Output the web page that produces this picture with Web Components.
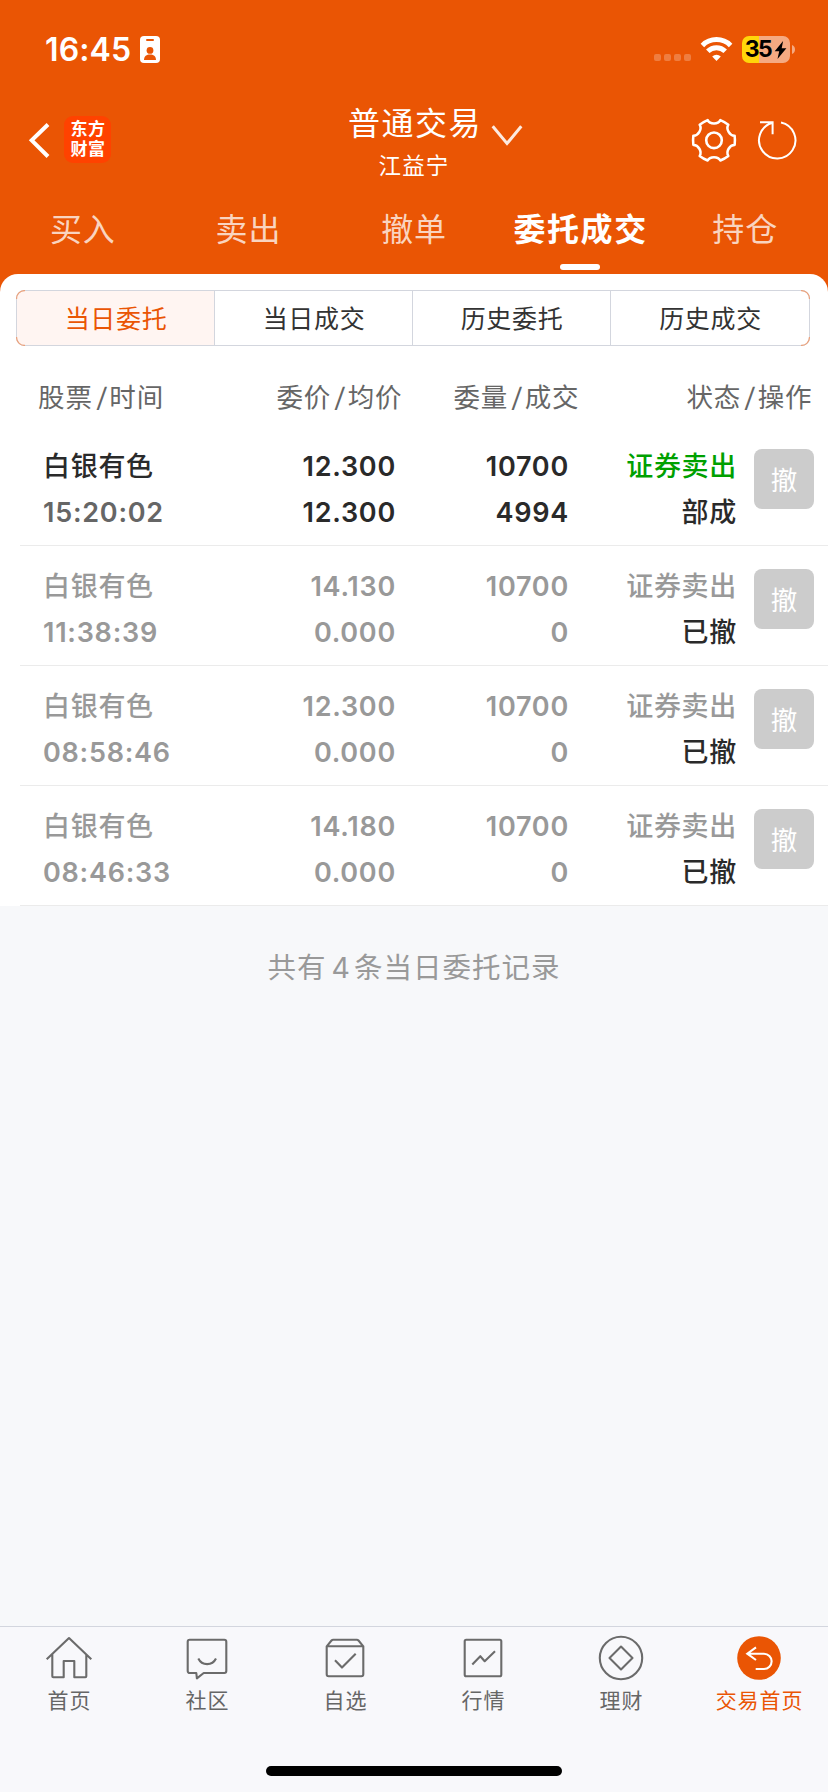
<!DOCTYPE html>
<html lang="zh-CN">
<head>
<meta charset="utf-8">
<title>委托成交</title>
<style>
html,body{margin:0;padding:0}
body{width:828px;height:1792px;overflow:hidden;background:#f7f8fa;font-family:Inter,"Noto Sans CJK SC",sans-serif}
</style>
</head>
<body>
<trade-app></trade-app>
<script>
const define = (name, html, after) => customElements.define(name, class extends HTMLElement {
  constructor() {
    super();
    const t = document.createElement('template');
    t.innerHTML = '<style>*{box-sizing:border-box}svg{display:block;flex:none}</style>' + html;
    this.attachShadow({mode: 'open'}).append(t.content.cloneNode(true));
  }
  connectedCallback() { if (after) after(this, this.shadowRoot); }
});

define('status-bar', `
<style>
:host{display:flex;height:98px;padding:0 33px 0 44px;color:#fff}
.time{margin-top:30px;font-size:32px;line-height:40px;font-weight:600;letter-spacing:.1px;width:96px;padding-left:1px;white-space:nowrap}
.badge{margin-top:36px}
.right{margin:36px 0 0 auto;display:flex}
.battery{display:flex;align-items:center;justify-content:center;width:48px;height:27px;margin-left:9px;border-radius:7px;background:linear-gradient(90deg,#ffd60a 17px,#f5aa82 17px);color:#000;font-size:23px;font-weight:700;line-height:27px;letter-spacing:-1.600px}
.battery svg{margin-left:3px}
.nub{margin-left:2px}
</style>
<span class="time">16:45</span>
<svg class="badge" width="20" height="27" viewBox="0 0 20 27"><rect width="20" height="27" rx="4" fill="#fff"/><rect x="6" y="3" width="8" height="2" rx="1" fill="#ea5504"/><circle cx="10" cy="14.4" r="3.4" fill="#ea5504"/><path d="M4 24c0-3.600 2.600-5.400 6-5.400s6 1.800 6 5.400z" fill="#ea5504"/></svg>
<div class="right">
<svg width="79" height="27" viewBox="0 0 79 27"><g fill="#fff" fill-opacity=".24"><rect y="18" width="7" height="7" rx="2"/><rect x="10" y="18" width="7" height="7" rx="2"/><rect x="20" y="18" width="7" height="7" rx="2"/><rect x="30" y="18" width="7" height="7" rx="2"/></g>
<g fill="none" stroke="#fff" stroke-width="5"><path d="M48.400 9.400a20 20 0 0 1 28.200 0"/><path d="M53.800 15.200a12.500 12.500 0 0 1 17.400 0"/></g><path d="M58.200 20.400a6.200 6.200 0 0 1 8.600 0L62.500 25z" fill="#fff"/></svg>
<div class="battery"><span>35</span><svg width="13" height="18" viewBox="0 0 12 18"><path d="M8.600 0L.2 10.300h4.500L3 18 11.900 7.200H7.200z"/></svg></div>
<svg class="nub" width="3" height="27" viewBox="0 0 3 27"><path d="M0 9c4 1.500 4 7.500 0 9z" fill="#f5aa82"/></svg>
</div>`);

define('app-logo', `
<style>
:host{display:flex;flex-direction:column;align-items:center;width:47px;height:47px;padding:4px 0 0 1px;border-radius:9px;background:#ff4200;color:#fff;font-family:"Liberation Sans","Noto Sans CJK SC",sans-serif;font-size:17px;line-height:20px;font-weight:700;letter-spacing:.5px}
</style><span>东方</span><span>财富</span>`);

define('title-bar', `
<style>
:host{display:grid;grid-template-columns:347px 132px 1fr;height:84px;color:#fff}
.left{display:flex;align-items:flex-start;padding:18px 0 0 26px}
.left svg{margin-right:10px}
.mid{text-align:center;white-space:nowrap}
.t{font-size:32px;line-height:40px;margin-top:6px;letter-spacing:1.500px;padding-left:1px}
.s{font-size:22.500px;line-height:30px;margin-top:7px;letter-spacing:1.200px;padding-left:2px}
.right{display:flex;align-items:flex-start;padding:18px 30px 0 11px}
.down{margin:8px auto 0 0}
.gear{margin-right:17px}
</style>
<div class="left"><svg width="28" height="48" viewBox="0 0 28 48" fill="none" stroke="#fff" stroke-width="4"><path d="M22 8.500L5.700 24.300 22 40.500"/></svg><app-logo></app-logo></div>
<div class="mid"><div class="t">普通交易</div><div class="s">江益宁</div></div>
<div class="right">
<svg class="down" width="34" height="24" viewBox="0 0 34 24" fill="none" stroke="#fff" stroke-opacity=".88" stroke-width="3"><path d="M2.700 2.300L17 19.500 31.300 2.300"/></svg>
<svg class="gear" width="46" height="48" viewBox="-23 -24.300 46 48" fill="none" stroke="#fff" stroke-width="2.600" stroke-linejoin="round"><path transform="scale(.975)" d="M-6.500-20.700C-4.200-16.200 4.200-16.200 6.500-20.700Q10.900-18.900 14.670-15.980C11.930-11.740 16.130-4.460 21.170-4.720Q21.800 0 21.170 4.720C16.130 4.460 11.930 11.740 14.670 15.980Q10.900 18.900 6.500 20.700C4.200 16.200-4.200 16.200-6.500 20.700Q-10.900 18.900-14.670 15.980C-11.930 11.740-16.130 4.460-21.170 4.720Q-21.800 0-21.170-4.720C-16.130-4.460-11.930-11.740-14.670-15.980Q-10.900-18.900-6.500-20.700Z"/><circle r="7.800"/></svg>
<svg width="44" height="48" viewBox="-23 -24.300 44 48" fill="none" stroke="#fff" stroke-width="2"><path d="M4-17.800A18.200 18.200 0 1 1-4.400-17.600M-17-18H-4.400V-6"/></svg>
</div>`);

define('main-tab', `
<style>
:host{display:flex;flex-direction:column;align-items:center;flex:1 1 0;color:rgba(255,255,255,.76);font-size:32px;line-height:40px;letter-spacing:.8px;padding-top:28px;white-space:nowrap}
:host([active]){color:#fff;font-weight:600;letter-spacing:1.600px}
:host([active]) span{padding-left:2px}
i{display:none;width:40px;height:6px;border-radius:3px;background:#fff;margin-top:14px}
:host([active]) i{display:block}
</style><span><slot></slot></span><i></i>`);

define('main-tabs', `
<style>:host{display:flex;height:108px}</style>
<main-tab>买入</main-tab><main-tab>卖出</main-tab><main-tab>撤单</main-tab><main-tab active>委托成交</main-tab><main-tab>持仓</main-tab>`);

define('filter-segments', `
<style>
:host{display:grid;grid-template-columns:198px 198px 198px 198px;width:794px;height:56px;margin-left:16px;position:relative;border:1px solid #d3d6de;border-radius:8px;font-size:25px;line-height:56px;letter-spacing:.65px;color:#333;text-align:center}
span{height:54px;padding-left:1px;border-right:1px solid #d3d6de}
span:last-of-type{border:0}
.on{background:#fff5f2;color:#ea5504;border-radius:7px 0 0 7px}
svg{position:absolute;left:-1px;top:-1px}
</style>
<span class="on">当日委托</span><span>当日成交</span><span>历史委托</span><span>历史成交</span>
<svg width="794" height="56" viewBox="0 0 794 56" fill="none" stroke="#eba17b" stroke-width="1.200"><path d="M.6 9A8 8 0 0 1 9 .6M.6 47A8 8 0 0 0 9 55.400M785 .6A8 8 0 0 1 793.400 9M785 55.400A8 8 0 0 0 793.400 47"/></svg>`);

define('order-head', `
<style>
:host{display:grid;grid-template-columns:402.500px 177px 233px;height:80px;font-size:26.500px;line-height:40px;letter-spacing:.9px;color:#666;padding-top:31px;white-space:nowrap}
div{display:flex;justify-content:space-between;padding-left:38px}
.r{text-align:right}
b{display:inline-block;font-weight:400;margin:0 2px 0 4px;transform:skewX(-5deg)}
</style>
<div><span>股票<b>/</b>时间</span><span>委价<b>/</b>均价</span></div><span class="r">委量<b>/</b>成交</span><span class="r">状态<b>/</b>操作</span>`);

define('order-row', `
<style>
:host{display:grid;grid-template-columns:180px 173px 173px 168px 1fr;height:120px;margin-left:20px;padding:18px 14px 0 23px;border-bottom:1px solid #ebebeb;font-size:27px;line-height:46px;font-weight:500;color:#999;white-space:nowrap}
:host([live]){color:#2a2a2a}
div{display:flex;flex-direction:column;align-items:flex-end}
.name{align-items:flex-start}
.cjk{letter-spacing:.7px}
.num{font-weight:600;letter-spacing:.75px}
:host([live]) .time{color:#666}
:host([live]) .side{color:#00a000}
.state{color:#2a2a2a}
button{all:unset;box-sizing:border-box;width:60px;height:60px;margin:5px 0 0 auto;border-radius:8px;background:#ccc;color:#fff;font-size:26.500px;line-height:62px;text-align:center;font-weight:400}
</style>
<div class="name"><span class="cjk">白银有色</span><span class="num time"></span></div>
<div class="num"><span class="price"></span><span class="avg"></span></div>
<div class="num"><span>10700</span><span class="done"></span></div>
<div class="cjk"><span class="side">证券卖出</span><span class="state"></span></div>
<button>撤</button>`, (el, root) => {
  for (const k of ['time', 'price', 'avg', 'done', 'state']) root.querySelector('.' + k).textContent = el.getAttribute(k);
});

define('order-panel', `
<style>
:host{display:block;background:#fff;border-radius:18px 18px 0 0;padding-top:16px;height:632px}
</style>
<filter-segments></filter-segments>
<order-head></order-head>
<order-row live time="15:20:02" price="12.300" avg="12.300" done="4994" state="部成"></order-row>
<order-row time="11:38:39" price="14.130" avg="0.000" done="0" state="已撤"></order-row>
<order-row time="08:58:46" price="12.300" avg="0.000" done="0" state="已撤"></order-row>
<order-row time="08:46:33" price="14.180" avg="0.000" done="0" state="已撤"></order-row>`);

define('nav-item', `
<style>
:host{display:flex;flex-direction:column;align-items:center;color:#666;font-size:21px;line-height:28px;letter-spacing:.9px;padding-top:7px;white-space:nowrap}
:host([active]){color:#ea5504}
span{margin-top:5px;padding-left:1px}
</style><slot name="icon"></slot><span><slot></slot></span>`);

define('bottom-nav', `
<style>
:host{display:flex;flex-direction:column;align-items:center;height:166px;border-top:1px solid #d3d6de;background:#f8f8fb}
nav{display:grid;grid-template-columns:repeat(6,138px);height:139px}
svg{width:48px;height:48px;fill:none;stroke:#6b6b6b;stroke-width:2.100;stroke-linejoin:round}
.bar{width:296px;height:10px;border-radius:5px;background:#000}
</style>
<nav>
<nav-item><svg slot="icon" viewBox="0 0 48 48"><path d="M1.700 25.300L24 4 46.300 25.300M7.300 20.500V42.300a1 1 0 0 0 1 1H18.700V27H29.300V43.300H40.300a1 1 0 0 0 1-1V20.500"/></svg>首页</nav-item>
<nav-item><svg slot="icon" viewBox="0 0 48 48"><path d="M6.700 5.700H41.300a2 2 0 0 1 2 2V37a2 2 0 0 1-2 2H20.700L13.900 44.300 13.300 39H6.700a2 2 0 0 1-2-2V7.700a2 2 0 0 1 2-2ZM15.300 24.500C19 32 29.300 32 33 24.500"/></svg>社区</nav-item>
<nav-item><svg slot="icon" viewBox="0 0 48 48"><path d="M5.700 12.300H42.300V40.200a2 2 0 0 1-2 2H7.700a2 2 0 0 1-2-2V12.300L10.500 6.500Q11.200 5.700 12.200 5.700H35.800Q36.800 5.700 37.500 6.500L42.300 12.300M14 26.300L21 33.600 34.700 19.700"/></svg>自选</nav-item>
<nav-item><svg slot="icon" viewBox="0 0 48 48"><rect x="5.700" y="5.700" width="36.600" height="36.600" rx="1.500"/><path d="M13.300 30.500L21.300 22.200 25.700 27.200 36 17.300"/></svg>行情</nav-item>
<nav-item><svg slot="icon" viewBox="0 0 48 48"><circle cx="24" cy="24" r="21.200"/><path d="M24 12.500L35.500 24 24 35.500 12.500 24Z"/></svg>理财</nav-item>
<nav-item active><svg slot="icon" viewBox="0 0 48 48"><circle cx="24" cy="24" r="21.800" fill="#ea5504" stroke="none"/><path stroke="#fff" stroke-linejoin="miter" d="M21 13.400L12.300 19.700 21 26M12.300 19.700H29a7.650 7.650 0 0 1 0 15.300H20.700"/></svg>交易首页</nav-item>
</nav>
<div class="bar"></div>`);

define('trade-app', `
<style>
:host{display:flex;flex-direction:column;width:828px;height:1792px}
header{background:#ea5504;height:292px;flex:none}
order-panel{margin-top:-18px;flex:none}
.sum{text-align:center;margin-top:42px;font-size:28.500px;line-height:40px;color:#999;letter-spacing:1px}
.sum b{font-weight:400;margin:0 3px 0 5px}
bottom-nav{margin-top:auto}
</style>
<header><status-bar></status-bar><title-bar></title-bar><main-tabs></main-tabs></header>
<order-panel></order-panel>
<div class="sum">共有<b>4</b>条当日委托记录</div>
<bottom-nav></bottom-nav>`);
</script>
</body>
</html>
